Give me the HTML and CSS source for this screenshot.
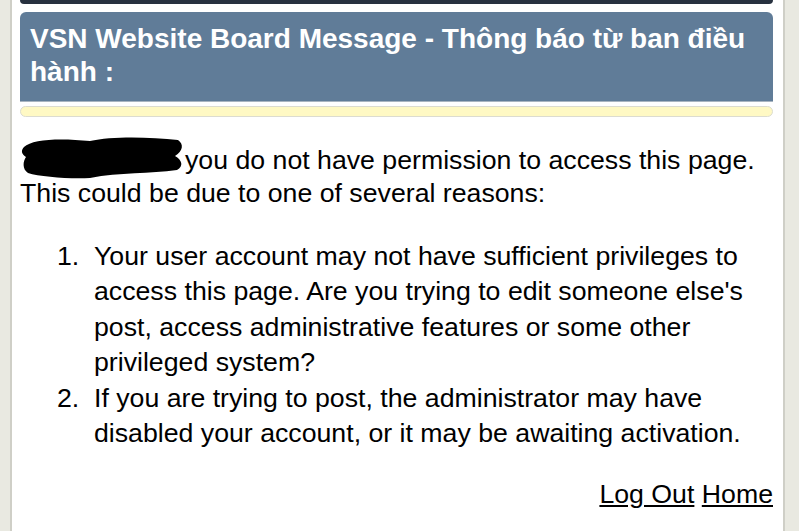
FILE: index.html
```html
<!DOCTYPE html>
<html lang="vi">
<head>
    <meta charset="UTF-8">
    <meta name="viewport" content="width=device-width, initial-scale=1.0">
    <title>VSN Website Board Message</title>
    <link rel="stylesheet" href="styles.css">
</head>
<body>
    <div class="page">
        <div class="topbar"></div>

        <div class="panel">
            <div class="panel-head">VSN Website Board Message - Thông báo từ ban điều hành :</div>
        </div>
        <div class="notice-strip"></div>

        <div class="message">
            <p class="intro"><span class="redacted"><svg width="164" height="44" viewBox="0 0 164 44">
                <path d="M4 12 C12 4 40 3 70 6 C92 1 130 2 158 5 C164 9 163 16 155 21 C162 25 164 31 157 35 C130 39 100 37 70 43 C50 44 20 42 8 38 C2 34 3 26 6 22 C1 19 1 15 4 12 Z" fill="#000"/>
            </svg></span>you do not have permission to access this page. This could be due to one of several reasons:</p>

            <ol class="reasons">
                <li>Your user account may not have sufficient privileges to access this page. Are you trying to edit someone else's post, access administrative features or some other privileged system?</li>
                <li>If you are trying to post, the administrator may have disabled your account, or it may be awaiting activation.</li>
            </ol>

            <div class="links">
                <a href="#">Log Out</a> <a href="#">Home</a>
            </div>
        </div>
    </div>
</body>
</html>
```

FILE: styles.css
```css
body {
    margin: 0;
    padding: 0;
    background-color: #e9e9e1;
    font-family: "Liberation Sans", Arial, sans-serif;
    color: #000;
}
.page {
    margin: 0 14px 0 10px;
    padding: 0 10px 0 8px;
    min-height: 531px;
    background-color: #fff;
    border-left: 2px solid #cfcfc7;
    border-right: 2px solid #cfcfc7;
}
.topbar {
    height: 4px;
    background-color: #27313f;
    border-radius: 0 0 5px 5px;
}
.panel {
    margin-top: 8px;
    background-color: #607c98;
    border-radius: 6px 6px 0 0;
    border-bottom: 1px solid #a8b4c0;
}
.panel-head {
    padding: 10px 10px 13px 10px;
    color: #fff;
    font-size: 28px;
    font-weight: bold;
    line-height: 33px;
}
.notice-strip {
    margin-top: 4px;
    height: 9px;
    background-color: #fff9c4;
    border: 1px solid #dcdcd0;
    border-radius: 6px;
}
.message {
    font-size: 26.7px;
    line-height: 33px;
}
.intro {
    margin: 27px 0 0 0;
}
.redacted {
    display: inline-block;
    vertical-align: 2px;
    margin: -12px 1px -12px 0;
}
.redacted svg {
    display: block;
}
.reasons {
    margin: 29px 0 0 0;
    padding-left: 74px;
    line-height: 35.4px;
}
.reasons li::marker {
    content: counter(list-item) ".\00a0\00a0";
}
.links {
    margin-top: 27px;
    text-align: right;
}
.links a {
    color: #000;
}
```
